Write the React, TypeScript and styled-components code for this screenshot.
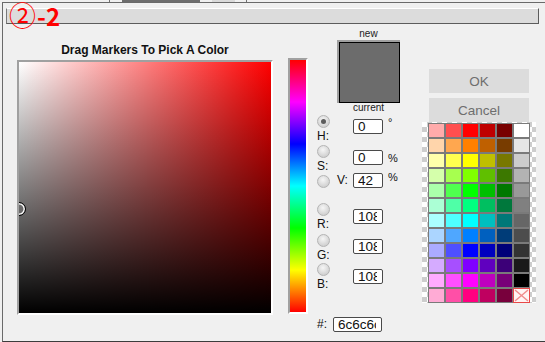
import React from "react";
import styled, { createGlobalStyle } from "styled-components";

const Global = createGlobalStyle`
  html, body { margin: 0; padding: 0; background: #f0f0f0; overflow: hidden; }
  body { font-family: "Liberation Sans", Arial, sans-serif; color: #111; }
`;

const Page = styled.div`
  width: 545px;
  height: 342px;
  position: relative;
  overflow: hidden;
  background: #f0f0f0;
`;

const TopStrip = styled.div`
  display: flex;
  height: 2px;
`;

const StripSeg = styled.div<{ $w: number; $c: string }>`
  flex: none;
  width: ${(p) => p.$w}px;
  background: ${(p) => p.$c};
`;

const Dialog = styled.div`
  margin-left: 2px;
  height: 338px;
  border-top: 1px solid #6a6a6a;
  border-left: 1px solid #6a6a6a;
  border-bottom: 1px solid #3c3c3c;
`;

const TitleBar = styled.div`
  box-sizing: border-box;
  height: 16px;
  margin: 5px 6px 0 3px;
  background: #dcdcdc;
  border-top: 1px solid #ffffff;
  border-left: 1px solid #7a7a7a;
  border-right: 1px solid #5c5c5c;
  border-bottom: 1px solid #5c5c5c;
`;

const Annotation = styled.div`
  position: absolute;
  left: 9px;
  top: 1px;
  display: flex;
  align-items: baseline;
  color: #ff0000;
  font-family: "Noto Sans CJK JP", "Noto Sans", sans-serif;
  white-space: nowrap;
`;

const Circled = styled.span`
  font-size: 27px;
  line-height: 27px;
  font-weight: 400;
`;

const Dash = styled.span`
  font-size: 24px;
  line-height: 24px;
  font-weight: 700;
  margin-left: 1px;
`;

const MainRow = styled.div`
  display: flex;
  align-items: flex-start;
  padding-left: 14px;
`;

const LeftCol = styled.div`
  width: 256px;
  padding-top: 19px;
`;

const PanelTitle = styled.div`
  font-size: 12px;
  font-weight: 700;
  line-height: 14px;
  text-align: center;
  color: #111;
  margin-bottom: 3px;
`;

const Sunken = styled.div<{ $w: number; $h: number }>`
  width: ${(p) => p.$w}px;
  height: ${(p) => p.$h}px;
  border: 2px solid;
  border-color: #a0a0a0 #ffffff #ffffff #a0a0a0;
`;

const SVArea = styled.div`
  position: relative;
  width: 100%;
  height: 100%;
  overflow: hidden;
  background: linear-gradient(to top, #000 0%, rgba(0, 0, 0, 0) 100%),
    linear-gradient(to right, #ffffff 0%, #ff0000 100%);
`;

const Marker = styled.div`
  position: absolute;
  left: -7px;
  top: 140px;
  width: 14px;
  height: 14px;
  box-sizing: border-box;
  border-radius: 50%;
  border: 1px solid #000;
  box-shadow: inset 0 0 0 1.5px #fff;
`;

const HueWrap = styled.div`
  margin-left: 15px;
  margin-top: 34px;
`;

const HueStrip = styled.div`
  width: 100%;
  height: 100%;
  background: linear-gradient(
    to bottom,
    #ff0000 0%,
    #ff00ff 16.67%,
    #0000ff 33.33%,
    #00ffff 50%,
    #00ff00 66.67%,
    #ffff00 83.33%,
    #ff0000 100%
  );
`;

const MiddleCol = styled.div`
  margin-left: 9px;
  width: 105px;
  padding-top: 4px;
`;

const SwatchBlock = styled.div`
  margin-left: 20px;
  width: 63px;
  display: flex;
  flex-direction: column;
  align-items: center;
`;

const SmallLabel = styled.div<{ $lh: number }>`
  font-size: 10px;
  line-height: ${(p) => p.$lh}px;
  color: #222;
`;

const SwatchFrame = styled.div`
  border-top: 2px solid #a0a0a0;
  border-left: 2px solid #a0a0a0;
`;

const SwatchFill = styled.div`
  width: 59px;
  height: 59px;
  border: 1px solid #000;
  background: #6c6c6c;
`;

const Channels = styled.div`
  margin-top: 2px;
`;

const ChannelRow = styled.div<{ $h: number }>`
  display: flex;
  align-items: flex-start;
  height: ${(p) => p.$h}px;
`;

const Selector = styled.div<{ $inline?: boolean; $pad: number }>`
  width: 36px;
  flex: none;
  padding-top: ${(p) => p.$pad}px;
  display: flex;
  flex-direction: ${(p) => (p.$inline ? "row" : "column")};
  align-items: flex-start;
  gap: ${(p) => (p.$inline ? "7px" : "2px")};
`;

const Radio = styled.div<{ $on?: boolean }>`
  position: relative;
  width: 13px;
  height: 13px;
  box-sizing: border-box;
  border-radius: 50%;
  border: 1px solid #b4b4b4;
  background: radial-gradient(circle at 45% 35%, #f6f6f6 0%, #dadada 55%, #c4c4c4 100%);
  &::after {
    content: "";
    display: ${(p) => (p.$on ? "block" : "none")};
    position: absolute;
    left: 3px;
    top: 3px;
    width: 5px;
    height: 5px;
    border-radius: 50%;
    background: #5c5c5c;
  }
`;

const ChanLabel = styled.div<{ $inline?: boolean }>`
  font-size: 12px;
  line-height: 13px;
  color: #111;
  margin-top: ${(p) => (p.$inline ? "-1px" : "0")};
`;

const Field = styled.div<{ $top: number; $w: number }>`
  box-sizing: border-box;
  flex: none;
  width: ${(p) => p.$w}px;
  height: 15px;
  margin-top: ${(p) => p.$top}px;
  padding: 0 5px 0 4px;
  border: 1px solid #4a4a4a;
  border-radius: 2px;
  background: #fff;
`;

const FieldText = styled.div`
  font-size: 13.5px;
  line-height: 13px;
  color: #111;
  white-space: nowrap;
  overflow: hidden;
`;

const Unit = styled.div<{ $top: number }>`
  margin-left: 5px;
  margin-top: ${(p) => p.$top}px;
  font-size: 11px;
  line-height: 12px;
  color: #111;
`;

const HexRow = styled.div`
  display: flex;
  align-items: flex-start;
`;

const HexLabel = styled.div`
  width: 16px;
  font-size: 12px;
  line-height: 14px;
  color: #111;
`;

const RightCol = styled.div`
  margin-top: 45px;
  width: 114px;
`;

const Button = styled.div`
  margin-left: 7px;
  margin-bottom: 5px;
  width: 100px;
  height: 24px;
  background: #dcdcdc;
  color: #6e6e6e;
  font-size: 13.5px;
  display: flex;
  align-items: center;
  justify-content: center;
`;

const Palette = styled.div`
  margin-top: -5px;
  width: 114px;
  height: 181px;
  box-sizing: border-box;
  padding: 1px 6px 0;
  background-color: #ffffff;
  background-image: linear-gradient(45deg, #cdcdcd 25%, transparent 25%, transparent 75%, #cdcdcd 75%),
    linear-gradient(45deg, #cdcdcd 25%, transparent 25%, transparent 75%, #cdcdcd 75%);
  background-size: 10px 10px;
  background-position: 0 0, 5px 5px;
`;

const Grid = styled.div`
  display: grid;
  grid-template-columns: repeat(6, 17px);
  grid-auto-rows: 15px;
`;

const Cell = styled.div<{ $c: string }>`
  box-sizing: border-box;
  border: 1px solid #7a7a7a;
  background: ${(p) => p.$c};
`;

const NoneCell = styled.div`
  box-sizing: border-box;
  border: 1px solid #e84848;
  background: #fff4f4;
  display: flex;
`;

function hsv(h: number, s: number, v: number): string {
  const f = (n: number) => {
    const k = (n + h / 60) % 6;
    return v - v * s * Math.max(0, Math.min(k, 4 - k, 1));
  };
  const to = (x: number) => Math.round(x * 255).toString(16).padStart(2, "0");
  return `#${to(f(5))}${to(f(3))}${to(f(1))}`;
}

const grays = ["#ffffff", "#e6e6e6", "#cccccc", "#b3b3b3", "#999999", "#808080", "#666666", "#4d4d4d", "#333333", "#1a1a1a", "#000000"];

const rows = Array.from({ length: 12 }, (_, i) => {
  const h = i * 30;
  return [hsv(h, 0.33, 1), hsv(h, 0.69, 1), hsv(h, 1, 1), hsv(h, 1, 0.75), hsv(h, 1, 0.47)];
});

const strip: [number, string][] = [
  [109, "#f0f0f0"],
  [1, "#707070"],
  [12, "#f0f0f0"],
  [78, "#6d6d6d"],
  [12, "#f0f0f0"],
  [23, "#dadada"],
  [11, "#f0f0f0"],
  [1, "#707070"],
  [298, "#f0f0f0"],
];

type Chan = {
  key: string;
  h: number;
  pad: number;
  top: number;
  value: string;
  unit?: string;
  unitTop?: number;
  inline?: boolean;
  on?: boolean;
};

const channels: Chan[] = [
  { key: "H", h: 30, pad: 0, top: 4, value: "0", unit: "°", unitTop: 1, on: true },
  { key: "S", h: 28, pad: 0, top: 5, value: "0", unit: "%", unitTop: 6 },
  { key: "V", h: 30, pad: 2, top: 0, value: "42", unit: "%", unitTop: 2, inline: true },
  { key: "R", h: 31, pad: 0, top: 6, value: "108" },
  { key: "G", h: 29, pad: 0, top: 5, value: "108" },
  { key: "B", h: 54, pad: 0, top: 6, value: "108" },
];

export default function App() {
  return (
    <Page>
      <Global />
      <TopStrip>
        {strip.map(([w, c], i) => (
          <StripSeg key={i} $w={w} $c={c} />
        ))}
      </TopStrip>
      <Dialog>
        <TitleBar />
        <MainRow>
          <LeftCol>
            <PanelTitle>Drag Markers To Pick A Color</PanelTitle>
            <Sunken $w={252} $h={251}>
              <SVArea>
                <Marker />
              </SVArea>
            </Sunken>
          </LeftCol>
          <HueWrap>
            <Sunken $w={16} $h={252}>
              <HueStrip />
            </Sunken>
          </HueWrap>
          <MiddleCol>
            <SwatchBlock>
              <SmallLabel $lh={12}>new</SmallLabel>
              <SwatchFrame>
                <SwatchFill />
              </SwatchFrame>
              <SmallLabel $lh={10}>current</SmallLabel>
            </SwatchBlock>
            <Channels>
              {channels.map((c) => (
                <ChannelRow key={c.key} $h={c.h}>
                  <Selector $inline={c.inline} $pad={c.pad}>
                    <Radio $on={c.on} />
                    <ChanLabel $inline={c.inline}>{c.key}:</ChanLabel>
                  </Selector>
                  <Field $top={c.top} $w={30}>
                    <FieldText>{c.value}</FieldText>
                  </Field>
                  {c.unit && <Unit $top={c.top + (c.unitTop ?? 0) - 4}>{c.unit}</Unit>}
                </ChannelRow>
              ))}
              <HexRow>
                <HexLabel>#:</HexLabel>
                <Field $top={0} $w={49}>
                  <FieldText>6c6c6c</FieldText>
                </Field>
              </HexRow>
            </Channels>
          </MiddleCol>
          <RightCol>
            <Button>OK</Button>
            <Button>Cancel</Button>
            <Palette>
              <Grid>
                {rows.map((r, i) => (
                  <React.Fragment key={i}>
                    {r.map((c, j) => (
                      <Cell key={j} $c={c} />
                    ))}
                    {i < 11 ? (
                      <Cell $c={grays[i]} />
                    ) : (
                      <NoneCell>
                        <svg width="15" height="13" viewBox="0 0 15 13">
                          <line x1="1" y1="1" x2="14" y2="12" stroke="#f08a8a" strokeWidth="1.4" />
                          <line x1="14" y1="1" x2="1" y2="12" stroke="#f08a8a" strokeWidth="1.4" />
                        </svg>
                      </NoneCell>
                    )}
                  </React.Fragment>
                ))}
              </Grid>
            </Palette>
          </RightCol>
        </MainRow>
      </Dialog>
      <Annotation>
        <Circled>②</Circled>
        <Dash>-2</Dash>
      </Annotation>
    </Page>
  );
}
